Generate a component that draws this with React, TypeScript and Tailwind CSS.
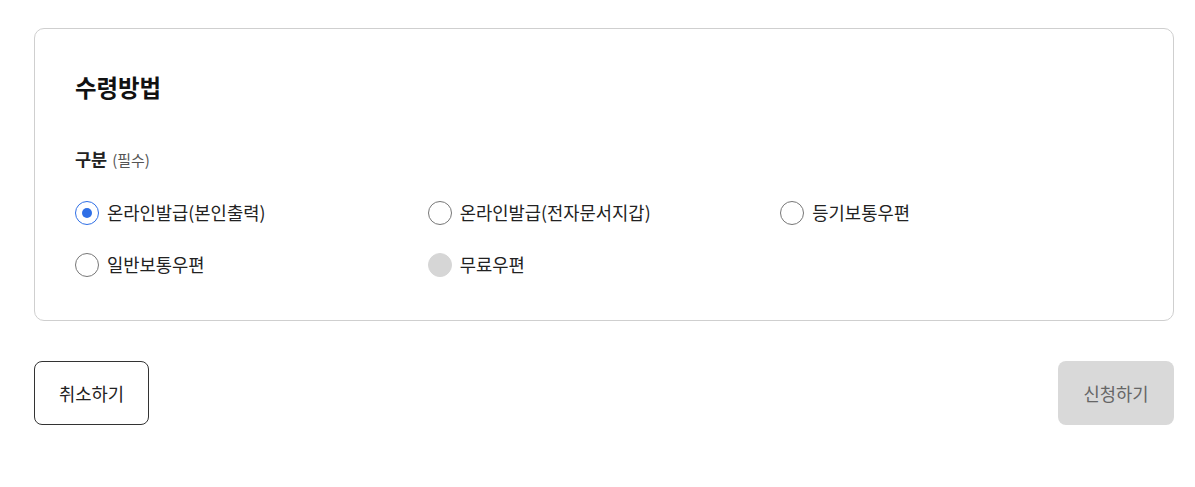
import React, { useState } from 'react';

const options = [
  { id: 'online-self', label: '온라인발급(본인출력)' },
  { id: 'online-wallet', label: '온라인발급(전자문서지갑)' },
  { id: 'registered', label: '등기보통우편' },
  { id: 'normal', label: '일반보통우편' },
  { id: 'free', label: '무료우편', disabled: true },
];

const Radio: React.FC<{
  label: string;
  checked: boolean;
  disabled?: boolean;
  onSelect: () => void;
}> = ({ label, checked, disabled, onSelect }) => (
  <label
    className={`flex items-center gap-[8px] h-[26px] ${disabled ? 'cursor-not-allowed' : 'cursor-pointer'}`}
    onClick={() => !disabled && onSelect()}
  >
    <span
      className={`flex items-center justify-center w-[24px] h-[24px] rounded-full border
        ${disabled ? 'bg-[#d6d6d6] border-[#d6d6d6]' : checked ? 'border-[#2f6fe6] bg-white' : 'border-[#777] bg-white'}`}
    >
      {checked && <span className="block w-[10px] h-[10px] rounded-full bg-[#2f6fe6]" />}
    </span>
    <span className="text-[17.7px] text-[#222] leading-none">{label}</span>
  </label>
);

export default function App() {
  const [selected, setSelected] = useState('online-self');

  return (
    <div
      className="bg-white min-h-[487px] px-[34px] pt-[28px]"
      style={{ fontFamily: '"Noto Sans CJK KR", "Noto Sans", sans-serif' }}
    >
      <section className="w-[1140px] border border-[#cfcfcf] rounded-[10px] px-[40px] pt-[40px] pb-[42px]">
        <h2 className="text-[23.4px] font-bold text-[#111] leading-[36px]">수령방법</h2>

        <div className="mt-[42px] h-[24px] flex items-center gap-[5px]">
          <span className="text-[17.5px] font-bold text-[#222] leading-none">구분</span>
          <span className="text-[15px] text-[#555] leading-none">(필수)</span>
        </div>

        <div className="mt-[29px] grid grid-cols-3 gap-y-[26px]">
          {options.map((o) => (
            <Radio
              key={o.id}
              label={o.label}
              checked={selected === o.id}
              disabled={o.disabled}
              onSelect={() => setSelected(o.id)}
            />
          ))}
        </div>
      </section>

      {/* Bottom actions */}
      <div className="mt-[40px] w-[1140px] flex justify-between">
        <button className="w-[115px] h-[64px] rounded-[8px] border border-[#333] bg-white text-[17.7px] text-[#222]">
          취소하기
        </button>
        <button
          disabled
          className="w-[116px] h-[64px] rounded-[8px] bg-[#d9d9d9] text-[17.7px] text-[#666] cursor-not-allowed"
        >
          신청하기
        </button>
      </div>
    </div>
  );
}
